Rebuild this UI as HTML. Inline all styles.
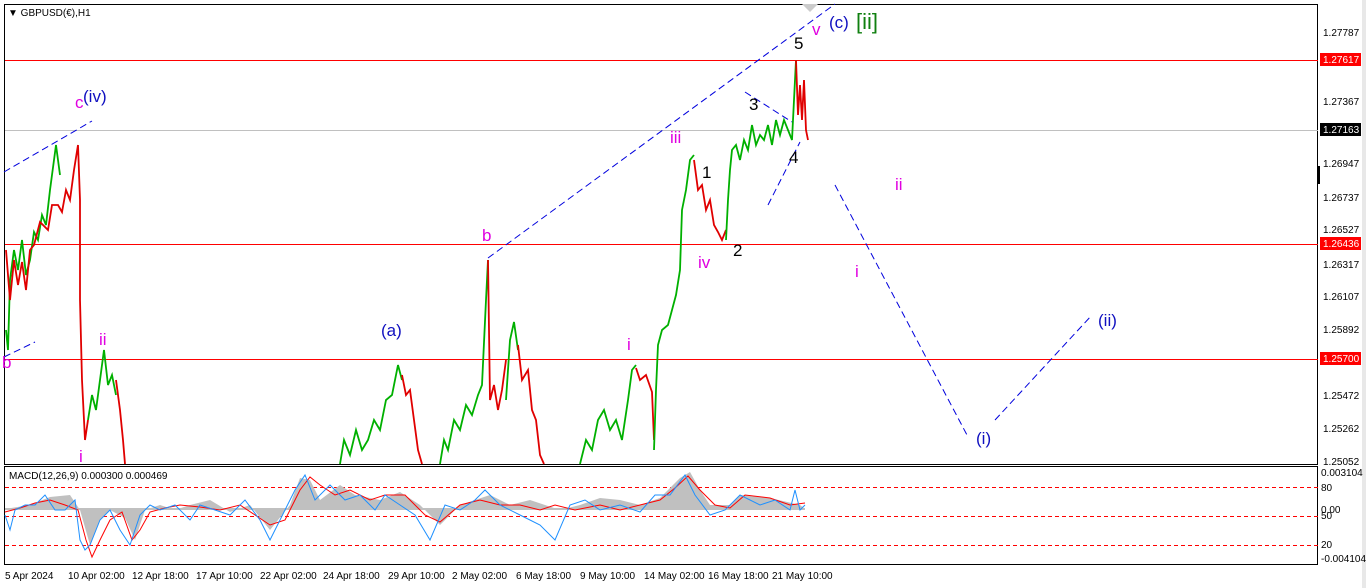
<!DOCTYPE html>
<html><head><meta charset="utf-8"><style>
html,body{margin:0;padding:0;background:#fff;width:1366px;height:588px;overflow:hidden;font-family:"Liberation Sans",sans-serif}
svg{display:block}
</style></head><body>
<svg width="1366" height="588" xmlns="http://www.w3.org/2000/svg" font-family="Liberation Sans, sans-serif">
<rect x="0" y="0" width="1366" height="588" fill="#fff"/>
<rect x="1362" y="0" width="4" height="588" fill="#e8e8e8"/>
<rect x="4.5" y="4.5" width="1313" height="460" fill="none" stroke="#000"/>
<rect x="4.5" y="466.5" width="1313" height="98" fill="none" stroke="#000"/>
<line x1="5" y1="60.5" x2="1318" y2="60.5" stroke="#f00"/>
<line x1="5" y1="130.5" x2="1318" y2="130.5" stroke="#c0c0c0"/>
<line x1="5" y1="244.5" x2="1318" y2="244.5" stroke="#f00"/>
<line x1="5" y1="359.5" x2="1318" y2="359.5" stroke="#f00"/>
<g fill="none" stroke-width="1.8">
<polyline stroke="#00b000" points="6,330 8,350 10,280 14,250 18,270 22,240 26,275 30,260 34,232 38,240 42,215 46,225 50,190 54,160 56,145 60,175"/>
<polyline stroke="#e00000" points="6,250 10,300 14,260 18,285 22,262 26,290 30,250 34,245 40,222 48,230 52,205 58,205 62,212 66,190 70,200 74,170 78,145 80,200 80,300 82,380 85,440 88,420"/>
<polyline stroke="#00b000" points="88,420 92,395 96,410 100,380 104,350 108,385 112,375 116,395"/>
<polyline stroke="#e00000" points="116,380 120,410 123,440 125,464"/>
<polyline stroke="#00b000" points="340,464 344,440 350,455 356,430 362,450 368,440 374,420 380,430 386,400 392,395 398,365 402,380"/>
<polyline stroke="#e00000" points="402,375 406,395 410,390 414,420 418,450 422,464"/>
<polyline stroke="#00b000" points="440,464 444,440 448,450 454,420 460,430 466,405 472,415 478,395 482,385 486,300 488,260"/>
<polyline stroke="#e00000" points="488,260 490,400 494,385 498,410 502,390 506,360"/>
<polyline stroke="#00b000" points="506,400 510,340 514,322 518,350"/>
<polyline stroke="#e00000" points="518,345 522,380 528,370 532,410 536,420 540,455 544,464"/>
<polyline stroke="#00b000" points="580,464 586,440 592,450 598,420 604,410 610,430 616,420 622,440 628,400 632,370 636,365"/>
<polyline stroke="#e00000" points="636,368 640,380 646,375 652,392 654,440"/>
<polyline stroke="#00b000" points="654,450 656,390 658,345 662,330 668,325 672,310 676,295 680,270 682,210 686,190 690,160 694,155"/>
<polyline stroke="#e00000" points="694,160 698,190 702,185 706,210 710,200 714,225 718,232 722,240 726,230"/>
<polyline stroke="#00b000" points="726,240 728,200 730,170 732,150 736,145 740,160 744,140 748,150 752,125 756,145 760,135 764,140 768,125 772,145 776,120 780,135 784,120 788,130 792,140 794,100 796,60"/>
<polyline stroke="#e00000" points="796,60 798,115 800,85 802,120 804,80 806,130 808,140"/>
</g>
<g stroke="#0000dd" stroke-dasharray="7,4" fill="none" stroke-width="1">
<line x1="4" y1="172" x2="92" y2="121"/>
<line x1="4" y1="357" x2="35" y2="342"/>
<line x1="488" y1="258" x2="835" y2="4"/>
<line x1="768" y1="205" x2="800" y2="142"/>
<line x1="745" y1="92" x2="792" y2="122"/>
<line x1="835" y1="185" x2="967" y2="435"/>
<line x1="995" y1="420" x2="1092" y2="315"/>
</g>
<polygon points="802,4 818,4 810,12" fill="#ccc"/>
<g font-size="17">
<text x="83" y="102" fill="#1010c0">(iv)</text>
<text x="75" y="108" fill="#e000e0">c</text>
<text x="2" y="368" fill="#e000e0">b</text>
<text x="99" y="345" fill="#e000e0">ii</text>
<text x="79" y="462" fill="#e000e0">i</text>
<text x="381" y="336" fill="#1010c0">(a)</text>
<text x="482" y="241" fill="#e000e0">b</text>
<text x="627" y="350" fill="#e000e0">i</text>
<text x="670" y="143" fill="#e000e0">iii</text>
<text x="702" y="178" fill="#000">1</text>
<text x="698" y="268" fill="#e000e0">iv</text>
<text x="733" y="256" fill="#000">2</text>
<text x="749" y="110" fill="#000">3</text>
<text x="789" y="163" fill="#000">4</text>
<text x="794" y="49" fill="#000">5</text>
<text x="812" y="35" fill="#e000e0">v</text>
<text x="829" y="28" fill="#1010c0">(c)</text>
<text x="856" y="29" fill="#108010" font-size="22">[ii]</text>
<text x="895" y="190" fill="#e000e0">ii</text>
<text x="855" y="277" fill="#e000e0">i</text>
<text x="976" y="444" fill="#1010c0">(i)</text>
<text x="1098" y="326" fill="#1010c0">(ii)</text>
</g>
<text x="8" y="16" font-size="10" fill="#000">▼ GBPUSD(€),H1</text>
<g font-size="10" fill="#000">
<text x="1323" y="36">1.27787</text>
<text x="1323" y="105">1.27367</text>
<text x="1323" y="167">1.26947</text>
<text x="1323" y="201">1.26737</text>
<text x="1323" y="233">1.26527</text>
<text x="1323" y="268">1.26317</text>
<text x="1323" y="300">1.26107</text>
<text x="1323" y="333">1.25892</text>
<text x="1323" y="399">1.25472</text>
<text x="1323" y="432">1.25262</text>
<text x="1323" y="465">1.25052</text>
<text x="1321" y="476">0.003104</text>
<text x="1321" y="491">80</text>
<text x="1321" y="513">0.00</text>
<text x="1321" y="519">50</text>
<text x="1321" y="548">20</text>
<text x="1321" y="562">-0.004104</text>
</g>
<rect x="1318" y="166" width="2" height="18" fill="#000"/>
<rect x="1320" y="53" width="41" height="13" fill="#f00"/><text x="1323" y="63" font-size="10" fill="#fff">1.27617</text>
<rect x="1320" y="123" width="41" height="13" fill="#000"/><text x="1323" y="133" font-size="10" fill="#fff">1.27163</text>
<rect x="1320" y="237" width="41" height="13" fill="#f00"/><text x="1323" y="247" font-size="10" fill="#fff">1.26436</text>
<rect x="1320" y="352" width="41" height="13" fill="#f00"/><text x="1323" y="362" font-size="10" fill="#fff">1.25700</text>
<text x="9" y="479" font-size="10" fill="#000">MACD(12,26,9) 0.000300 0.000469</text>
<g stroke="#f00" stroke-dasharray="4,3"><line x1="5" y1="487.5" x2="1318" y2="487.5"/><line x1="5" y1="516.5" x2="1318" y2="516.5"/><line x1="5" y1="545.5" x2="1318" y2="545.5"/></g>
<polygon fill="#c0c0c0" points="5,509 30,505 50,497 70,495 80,510 90,545 100,520 110,510 125,518 135,540 145,510 160,505 175,510 190,505 210,500 230,512 250,505 270,530 290,505 300,478 310,480 320,500 340,485 355,495 380,500 400,492 420,505 440,525 460,505 490,495 510,505 530,500 560,510 580,505 600,498 620,500 640,505 660,498 680,478 690,472 700,490 710,505 730,505 740,495 770,498 800,505 805,509"/>
<rect x="5" y="508" width="800" height="2" fill="#c0c0c0"/>
<polyline fill="none" stroke="#f00" points="5,512 20,508 35,503 50,500 65,505 78,510 86,540 92,557 100,540 110,520 122,512 132,540 140,530 150,512 165,508 180,505 200,507 220,510 240,505 255,515 270,525 285,520 300,490 310,477 320,485 335,495 350,490 370,500 385,495 405,495 425,515 440,522 460,505 480,500 500,505 520,505 540,510 555,505 575,510 600,505 620,510 640,505 660,500 675,488 688,476 700,490 715,505 730,508 745,495 770,498 790,505 805,503"/>
<polyline fill="none" stroke="#1e90ff" points="5,515 10,530 15,510 25,505 35,505 45,495 55,510 65,510 75,500 80,540 85,550 90,545 100,520 110,510 120,530 130,545 140,515 150,505 160,510 175,505 190,520 200,505 215,510 230,515 245,500 260,520 270,540 285,510 295,490 305,475 315,500 330,485 345,500 360,495 375,510 385,495 400,505 415,515 430,540 445,505 460,510 475,500 485,490 500,505 520,515 540,525 555,540 570,505 585,500 600,510 620,505 640,512 655,495 670,495 685,475 695,495 710,515 725,510 740,495 760,505 775,500 790,510 795,490 800,510 805,505"/>
<g font-size="10" fill="#000">
<text x="5" y="579">5 Apr 2024</text>
<text x="68" y="579">10 Apr 02:00</text>
<text x="132" y="579">12 Apr 18:00</text>
<text x="196" y="579">17 Apr 10:00</text>
<text x="260" y="579">22 Apr 02:00</text>
<text x="323" y="579">24 Apr 18:00</text>
<text x="388" y="579">29 Apr 10:00</text>
<text x="452" y="579">2 May 02:00</text>
<text x="516" y="579">6 May 18:00</text>
<text x="580" y="579">9 May 10:00</text>
<text x="644" y="579">14 May 02:00</text>
<text x="708" y="579">16 May 18:00</text>
<text x="772" y="579">21 May 10:00</text>
</g>
</svg>
</body></html>
